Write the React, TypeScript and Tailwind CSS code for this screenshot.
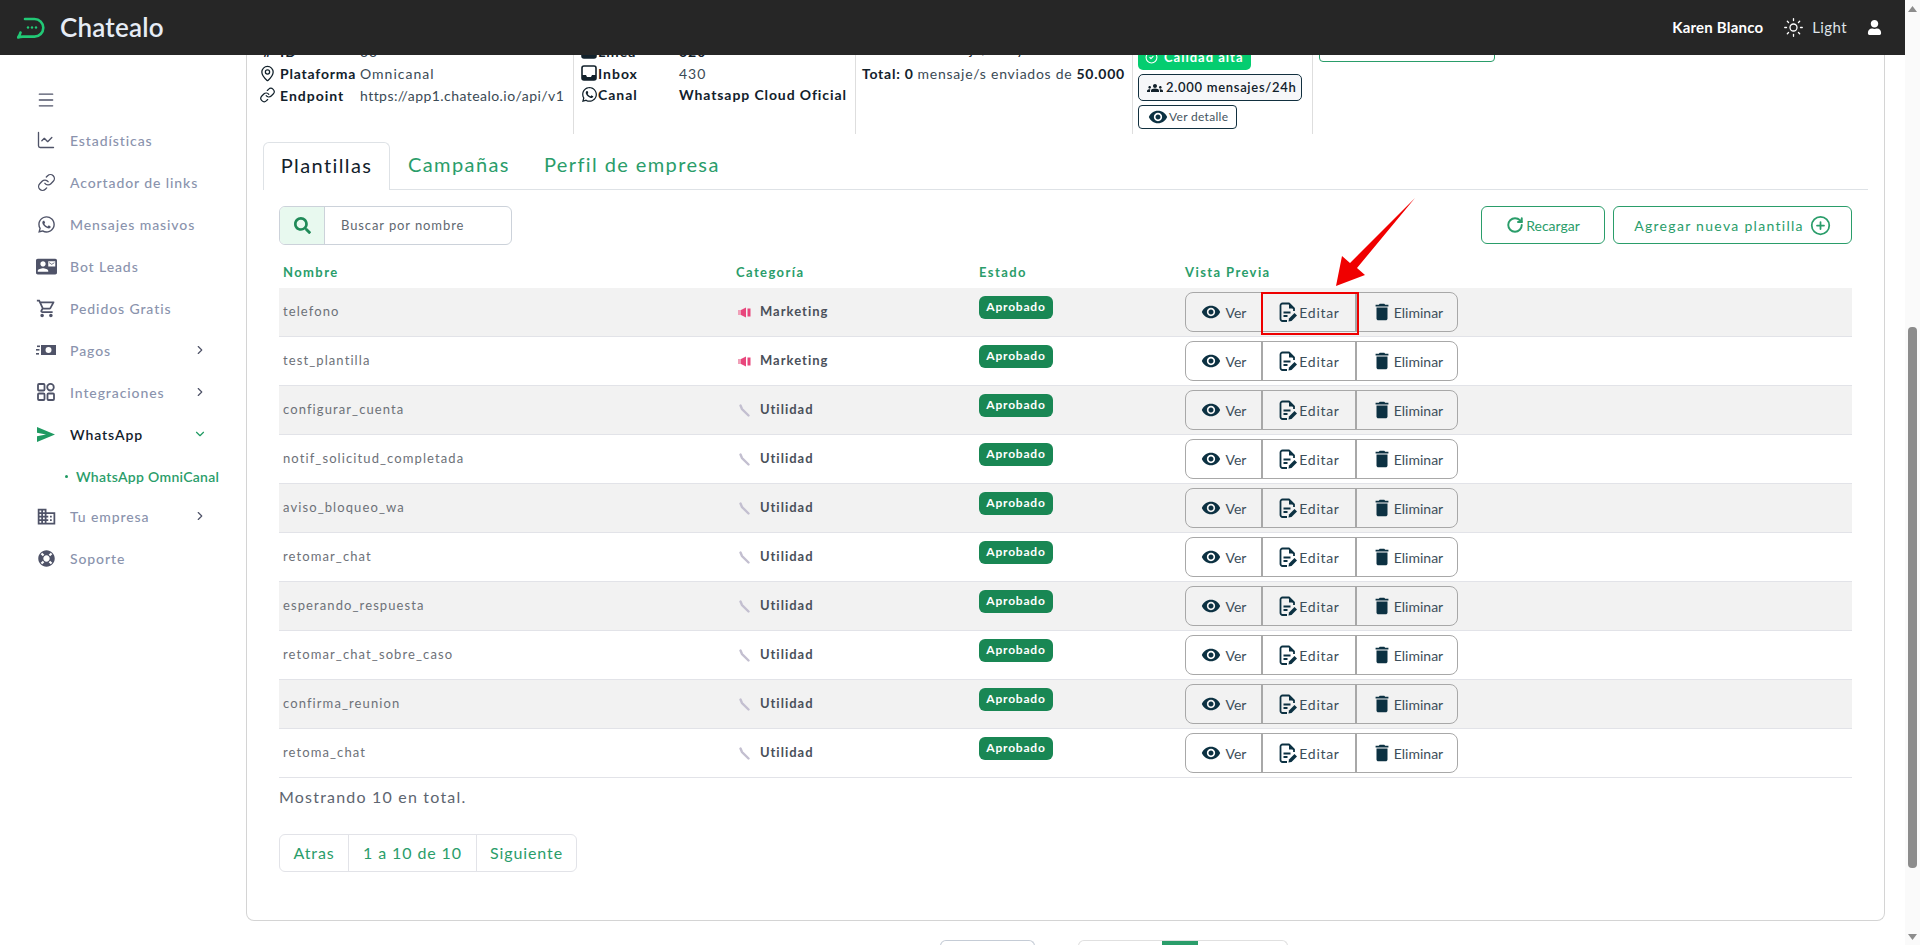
import { ChartLine, CircleCheck, CirclePlus, Link, MapPin, Menu, RotateCw, Sun, ChevronRight, ChevronDown } from "lucide-react";
import { FaLifeRing, FaSearch, FaUser, FaWhatsapp } from "react-icons/fa";
import { MdBusiness, MdContactMail, MdDelete, MdGroups, MdOutlineShoppingCart, MdVisibility } from "react-icons/md";
import type { ReactNode } from "react";

const font = "font-['Lato','Liberation_Sans',sans-serif]";

const templates = [
    { name: "telefono", category: "Marketing" },
    { name: "test_plantilla", category: "Marketing" },
    { name: "configurar_cuenta", category: "Utilidad" },
    { name: "notif_solicitud_completada", category: "Utilidad" },
    { name: "aviso_bloqueo_wa", category: "Utilidad" },
    { name: "retomar_chat", category: "Utilidad" },
    { name: "esperando_respuesta", category: "Utilidad" },
    { name: "retomar_chat_sobre_caso", category: "Utilidad" },
    { name: "confirma_reunion", category: "Utilidad" },
    { name: "retoma_chat", category: "Utilidad" },
];

function Logo() {
    return (
        <svg width="28" height="22" viewBox="0 0 28 22" fill="none" className="text-[#22c976]">
            <path d="M8 2 H17.5 a8.8 8.8 0 0 1 0 17.6 H6 Q3 19.6 1 20.5 Q3 18 3.5 15.5" stroke="currentColor" strokeWidth="2.6" strokeLinecap="round" strokeLinejoin="round" />
            <circle cx="11" cy="10.5" r="1.2" fill="currentColor" />
            <circle cx="15" cy="10.5" r="1.2" fill="currentColor" />
            <circle cx="19" cy="10.5" r="1.2" fill="currentColor" />
        </svg>
    );
}

function PagosIcon() {
    return (
        <svg width="20" height="12" viewBox="0 0 20 12" fill="currentColor">
            <path fillRule="evenodd" d="M5 1h15v10H5V1zm7.5 2a3 3 0 1 0 0 6 3 3 0 0 0 0-6z" />
            <rect x="1" y="1.5" width="3" height="1.6" />
            <rect x="0" y="5" width="3.5" height="1.6" />
            <rect x="0" y="9" width="3" height="1.6" />
        </svg>
    );
}

function IntegracionesIcon() {
    return (
        <svg width="18" height="18" viewBox="0 0 18 18" fill="none" stroke="currentColor" strokeWidth="1.8">
            <rect x="1" y="1" width="6.5" height="6.5" rx="1" />
            <circle cx="13.5" cy="4.2" r="3.3" />
            <rect x="1" y="10.5" width="6.5" height="6.5" rx="1" />
            <rect x="10.5" y="10.5" width="6.5" height="6.5" rx="1" />
        </svg>
    );
}

function SendIcon() {
    return (
        <svg width="18" height="15" viewBox="0 0 18 15" fill="#1f9a62">
            <path d="M0 0 L18 7.5 L0 15 L0 9.2 L9 7.5 L0 5.8 Z" />
        </svg>
    );
}

function InboxIcon() {
    return (
        <svg width="16" height="16" viewBox="0 0 16 16" fill="none" className="text-[#12212b]">
            <rect x="1" y="1" width="14" height="14" rx="2" stroke="currentColor" strokeWidth="1.6" />
            <path d="M1 10h4l1 2h4l1-2h4v4a1 1 0 0 1-1 1H2a1 1 0 0 1-1-1z" fill="currentColor" />
        </svg>
    );
}

function MarketingIcon() {
    return (
        <svg width="13" height="13" viewBox="0 0 13 13">
            <rect x="0" y="4" width="3" height="5" fill="#f0a0b8" />
            <path d="M3 4 L8 1.5 V11.5 L3 9 Z" fill="#e8467c" />
            <rect x="9.5" y="2.5" width="3" height="8" fill="#e8467c" />
        </svg>
    );
}

function UtilidadIcon() {
    return (
        <svg width="13" height="13" viewBox="0 0 13 13" fill="none">
            <path d="M2.5 1.5 L4 5 L9 10 L10.5 11.5" stroke="#c3bfd0" strokeWidth="2.4" strokeLinecap="round" />
        </svg>
    );
}

function EditFileIcon() {
    return (
        <svg width="20" height="21" viewBox="0 0 20 21" fill="none" className="text-[#0c3142]">
            <path d="M9 19 H4.5 a2 2 0 0 1-2-2 V3.5 a2 2 0 0 1 2-2 H11 L16 6.5 V9" stroke="currentColor" strokeWidth="1.8" strokeLinejoin="round" />
            <path d="M11 1.5 L16 6.5 H11 Z" fill="currentColor" />
            <path d="M5.5 10.5 H12.5 M5.5 14 H9.5" stroke="currentColor" strokeWidth="1.8" />
            <path d="M10.5 19.5 L11 16.5 L16.5 11 L19 13.5 L13.5 19 Z" fill="currentColor" />
        </svg>
    );
}

function NavItem({ icon, label, chevron, active }: { icon: ReactNode; label: string; chevron?: "right" | "down"; active?: boolean }) {
    return (
        <div className="flex h-[42px] items-center">
            <span className="flex w-[32px] justify-center text-[#4f5368]">{icon}</span>
            <span className={`ml-[8px] text-[14px] tracking-[0.9px] ${active ? "font-semibold text-[#12212b]" : "font-medium text-[#8a93ad]"}`}>{label}</span>
            {chevron === "right" && <ChevronRight size={14} strokeWidth={2} className="absolute left-[193px] text-[#4f5368]" />}
            {chevron === "down" && <ChevronDown size={14} strokeWidth={2} className="absolute left-[193px] text-[#1f9a62]" />}
        </div>
    );
}

function Sidebar() {
    return (
        <aside className="relative w-[246px] shrink-0 pl-[30px] pt-[24px]">
            <div className="flex h-[42px] w-[32px] items-center justify-center">
                <Menu size={20} strokeWidth={1.6} className="text-[#4f5368]" />
            </div>
            <div className="mt-[-2px]">
                <NavItem icon={<ChartLine size={20} strokeWidth={1.6} />} label="Estadísticas" />
                <NavItem icon={<Link size={19} strokeWidth={1.7} />} label="Acortador de links" />
                <NavItem icon={<FaWhatsapp size={19} />} label="Mensajes masivos" />
                <NavItem icon={<MdContactMail size={21} />} label="Bot Leads" />
                <NavItem icon={<MdOutlineShoppingCart size={21} />} label="Pedidos Gratis" />
                <NavItem icon={<PagosIcon />} label="Pagos" chevron="right" />
                <NavItem icon={<IntegracionesIcon />} label="Integraciones" chevron="right" />
                <NavItem icon={<SendIcon />} label="WhatsApp" chevron="down" active />
                <div className="flex h-[40px] items-center pt-[3px]">
                    <span className="ml-[35px] h-[3px] w-[3px] rounded-full bg-[#1f9a62]" />
                    <span className="ml-[8px] text-[14px] font-semibold tracking-[0.3px] text-[#2a9d6a]">WhatsApp OmniCanal</span>
                </div>
                <NavItem icon={<MdBusiness size={21} />} label="Tu empresa" chevron="right" />
                <NavItem icon={<FaLifeRing size={17} />} label="Soporte" />
            </div>
        </aside>
    );
}

function InfoRows() {
    return (
        <div className="-mt-[15px] flex h-[94px] pl-[8px] text-[14px] tracking-[1px] text-[#12212b]">
            <div className="w-[319px] shrink-0 border-r border-[#dedede]">
                <div className="flex h-[22px] items-center">
                    <span className="flex w-[25px] justify-center"><span className="font-bold">#</span></span>
                    <span className="w-[80px] shrink-0 font-bold">ID</span>
                    <span className="text-[#3a4a55]">33</span>
                </div>
                <div className="flex h-[22px] items-center">
                    <MapPin size={17} strokeWidth={1.8} className="w-[25px] shrink-0" />
                    <span className="w-[80px] shrink-0 font-bold tracking-[0.8px]">Plataforma</span>
                    <span className="text-[#3a4a55]">Omnicanal</span>
                </div>
                <div className="flex h-[22px] items-center">
                    <Link size={16} strokeWidth={1.8} className="w-[25px] shrink-0" />
                    <span className="w-[80px] shrink-0 font-bold">Endpoint</span>
                    <span className="whitespace-nowrap tracking-[0.45px] text-[#3a4a55]">https://app1.chatealo.io/api/v1</span>
                </div>
            </div>
            <div className="w-[282px] shrink-0 border-r border-[#dedede] pl-[7px]">
                <div className="flex h-[22px] items-center">
                    <span className="w-[17px]"><InboxIcon /></span>
                    <span className="w-[81px] font-bold">Línea</span>
                    <span className="font-bold">320</span>
                </div>
                <div className="flex h-[22px] items-center">
                    <span className="w-[17px]"><InboxIcon /></span>
                    <span className="w-[81px] font-bold">Inbox</span>
                    <span className="text-[#3a4a55]">430</span>
                </div>
                <div className="flex h-[21px] items-center">
                    <FaWhatsapp size={17} className="w-[17px]" />
                    <span className="w-[81px] font-bold">Canal</span>
                    <span className="font-bold tracking-[0.9px]">Whatsapp Cloud Oficial</span>
                </div>
            </div>
            <div className="w-[277px] shrink-0 border-r border-[#dedede] pl-[6px] tracking-[0.75px]">
                <div className="flex h-[18px] items-center">Límite: 0 mensaje/s hoy</div>
                <div className="mt-[4px] flex h-[22px] items-center whitespace-nowrap text-[#3a4a55]">
                    <b className="mr-[4px] text-[#12212b]">Total: 0</b> mensaje/s enviados de <b className="ml-[4px] text-[#12212b]">50.000</b>
                </div>
            </div>
            <div className="flex w-[180px] shrink-0 flex-col items-start justify-end gap-[4px] border-r border-[#dedede] pb-[5px] pl-[5px]">
                <span className="flex h-[25px] items-center gap-[6px] rounded-[5px] bg-[#04cd70] px-[7px] text-[13px] font-bold text-white">
                    <CircleCheck size={13} /> Calidad alta
                </span>
                <span className="flex h-[27px] w-[164px] items-center gap-[3px] rounded-[5px] border border-[#12303f] bg-[#f6f7f9] pl-[8px] text-[13px] font-semibold tracking-[0.7px] whitespace-nowrap">
                    <MdGroups size={16} className="shrink-0" /> 2.000 mensajes/24h
                </span>
                <span className="flex h-[24px] w-[99px] items-center gap-[1px] rounded-[4px] border border-[#12303f] pl-[9px] text-[12px] tracking-[0.3px] text-[#45545e]">
                    <MdVisibility size={20} className="text-[#0c3142]" /> Ver detalle
                </span>
            </div>
            <div className="pl-[6px]">
                <div className="-mt-[1px] h-[23px] w-[176px] rounded-[4px] border border-[#2a9d6a]" />
            </div>
        </div>
    );
}

function Tabs() {
    return (
        <div className="mx-[16px] mt-[8px] flex h-[48px] items-stretch border-b border-[#dee2e6] text-[20px] tracking-[1.4px]">
            <div className="-mb-px flex w-[127px] items-center justify-center rounded-t-[6px] border border-b-0 border-[#dee2e6] bg-white pb-[4px] text-[#12212b]">Plantillas</div>
            <div className="ml-[18px] flex items-center pb-[4px] text-[#2a9d6a]">Campañas</div>
            <div className="ml-[34px] flex items-center pb-[4px] text-[#2a9d6a]">Perfil de empresa</div>
        </div>
    );
}

function Toolbar() {
    return (
        <div className="mt-[16px] flex items-start justify-between">
            <div className="flex h-[39px] w-[233px] overflow-hidden rounded-[6px] border border-[#ccd2da]">
                <span className="flex w-[45px] items-center justify-center border-r border-[#ccd2da] bg-[#e8f9ef] text-[#1f8a58]">
                    <FaSearch size={17} />
                </span>
                <span className="flex items-center pl-[16px] text-[13px] tracking-[0.9px] text-[#5f6870]">Buscar por nombre</span>
            </div>
            <div className="flex gap-[8px] text-[14px] text-[#2a9d6a]">
                <span className="flex h-[38px] w-[124px] items-center justify-center gap-[2px] rounded-[6px] border border-[#2a9d6a]">
                    <RotateCw size={18} strokeWidth={2.6} /> Recargar
                </span>
                <span className="flex h-[38px] w-[239px] items-center justify-center gap-[6px] rounded-[6px] border border-[#2a9d6a] tracking-[1.3px]">
                    Agregar nueva plantilla <CirclePlus size={21} strokeWidth={2} />
                </span>
            </div>
        </div>
    );
}

function Row({ name, category, striped }: { name: string; category: string; striped: boolean }) {
    return (
        <div className={`grid h-[49px] grid-cols-[453px_243px_206px_1fr] border-b border-[#e2e3e8] pl-[4px] ${striped ? "bg-[#f2f2f2]" : ""}`}>
            <div className="flex items-center text-[13px] tracking-[1.1px] text-[#6d7178]">{name}</div>
            <div className="flex items-center gap-[9px] pl-[2px] text-[13px] font-bold tracking-[1px] text-[#4a505a]">
                {category === "Marketing" ? <MarketingIcon /> : <UtilidadIcon />}
                {category}
            </div>
            <div className="pt-[5px]">
                <span className="inline-flex h-[23px] w-[74px] items-center justify-center rounded-[6px] bg-[#198754] text-[12px] font-bold tracking-[0.8px] text-white">Aprobado</span>
            </div>
            <div className="pt-[4px]">
                <div className="flex h-[40px] w-[273px] divide-x-2 divide-[#a8a8a8] rounded-[8px] border border-[#a8a8a8] text-[14px] text-[#3c4e5a]">
                    <span className="flex w-[77px] items-center justify-center gap-[5px]"><MdVisibility size={20} className="text-[#0c3142]" /> Ver</span>
                    <span className="flex w-[94px] items-center justify-center gap-[1px] tracking-[0.7px]"><EditFileIcon /> Editar</span>
                    <span className="flex flex-1 items-center justify-center gap-[1px]"><MdDelete size={22} className="text-[#0c3142]" /> Eliminar</span>
                </div>
            </div>
        </div>
    );
}

function TemplatesTable() {
    return (
        <div>
            <div className="grid h-[43px] grid-cols-[453px_243px_206px_1fr] items-center pl-[4px] pt-[13px] text-[13px] font-bold tracking-[1.4px] text-[#2a9d6a]">
                <span>Nombre</span>
                <span>Categoría</span>
                <span>Estado</span>
                <span>Vista Previa</span>
            </div>
            {templates.map((t, i) => (
                <Row key={t.name} name={t.name} category={t.category} striped={i % 2 === 0} />
            ))}
        </div>
    );
}

function Pagination() {
    return (
        <div className="mt-[25px] flex h-[38px] w-[298px] divide-x divide-[#e2e3e8] rounded-[6px] border border-[#e2e3e8] text-[16px] tracking-[0.9px] text-[#2a9d6a]">
            <span className="flex w-[69px] items-center justify-center">Atras</span>
            <span className="flex w-[128px] items-center justify-center">1 a 10 de 10</span>
            <span className="flex flex-1 items-center justify-center">Siguiente</span>
        </div>
    );
}

function Scrollbar() {
    return (
        <div className="flex w-[15px] shrink-0 flex-col items-center bg-[#fafafa] pt-[6px]">
            <svg width="9" height="6" viewBox="0 0 9 6" fill="#8c8c8c"><path d="M4.5 0 9 6H0z" /></svg>
            <div className="mt-[315px] h-[541px] w-[9px] rounded-[4px] bg-[#8c8c8c]" />
            <svg width="9" height="6" viewBox="0 0 9 6" fill="#8c8c8c" className="mt-[66px]"><path d="M4.5 6 9 0H0z" /></svg>
        </div>
    );
}

export default function App() {
    return (
        <div className={`relative flex h-screen w-screen overflow-hidden bg-white ${font}`}>
            <div className="flex min-w-0 flex-1 flex-col">
                <header className="flex h-[55px] shrink-0 items-center bg-[#262626] pl-[17px] pr-[23px] text-white">
                    <Logo />
                    <span className="ml-[15px] text-[26px] font-semibold tracking-[0.2px] text-[#e6ecf5]">Chatealo</span>
                    <span className="ml-auto text-[15px] font-bold tracking-[0.2px]">Karen Blanco</span>
                    <Sun size={21} strokeWidth={1.5} className="ml-[20px]" />
                    <span className="ml-[8px] text-[15px] tracking-[0.4px] text-[#dfe3e8]">Light</span>
                    <FaUser size={15} className="ml-[20px]" />
                </header>
                <div className="flex min-h-0 flex-1">
                    <Sidebar />
                    <main className="min-w-0 flex-1 overflow-hidden pr-[20px]">
                        <div className="h-[881px] rounded-b-[8px] border-x border-b border-[#d4d4d4]">
                            <InfoRows />
                            <Tabs />
                            <div className="pl-[32px] pr-[32px]">
                                <Toolbar />
                                <TemplatesTable />
                                <p className="mt-[7px] text-[16px] leading-[24px] tracking-[1.2px] text-[#5d6570]">Mostrando 10 en total.</p>
                                <Pagination />
                            </div>
                        </div>
                        <div className="mt-[19px] flex pl-[694px]">
                            <div className="h-[10px] w-[95px] rounded-t-[6px] border border-b-0 border-[#c5ccd6]" />
                            <div className="ml-[43px] flex h-[10px] w-[210px] rounded-t-[6px] border border-b-0 border-[#e0e0e0] pl-[83px]">
                                <span className="w-[36px] bg-[#2a9d6a]" />
                            </div>
                        </div>
                    </main>
                </div>
            </div>
            <Scrollbar />
            {/* anotacion roja sobre el boton editar */}
            <div className="absolute left-[1261px] top-[292px] h-[43px] w-[98px] border-2 border-[#ee0000]" />
            <svg className="absolute left-[1329px] top-[193px]" width="92" height="100" viewBox="0 0 92 100" fill="#f00000">
                <path d="M86 5 L28 75 L36 82 L7 93 L13 63 L21 70 Z" />
            </svg>
        </div>
    );
}
